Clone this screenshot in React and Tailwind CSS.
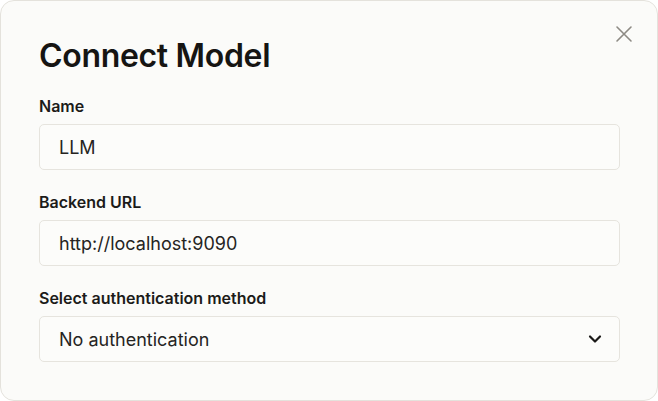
import React from 'react';

const Field = ({ label, children }) => (
  <div className="flex flex-col">
    <label className="text-[16px] leading-5 font-semibold text-[#1c1b19] mb-2">{label}</label>
    {children}
  </div>
);

const inputCls = 'h-[46px] flex items-center px-[19px] bg-[#fcfcfa] border border-[#e6e4de] rounded-[5px] text-[18px] text-[#252422]';

const App = () => {
  return (
    <div className="w-[658px] h-[401px] bg-white" style={{ fontFamily: 'Inter, "Noto Sans", sans-serif' }}>
      <div className="relative w-full h-full bg-[#fbfbf9] border border-[#e4e2dc] rounded-[14px] px-[38px] pt-[37px]">
        <button className="absolute top-[24px] right-[24px] text-[#8d8a84]">
          <svg width="18" height="18" viewBox="0 0 18 18" fill="none" stroke="currentColor" strokeWidth="1.6" strokeLinecap="round">
            <path d="M2 2L16 16M16 2L2 16" />
          </svg>
        </button>

        <h1 className="text-[32px] leading-9 font-semibold tracking-[-0.01em] text-[#161513] mb-[22px]">Connect Model</h1>

        <div className="flex flex-col gap-[22px] w-[581px]">
          <Field label="Name">
            <div className={inputCls}>LLM</div>
          </Field>
          <Field label="Backend URL">
            <div className={inputCls}>http://localhost:9090</div>
          </Field>
          <Field label="Select authentication method">
            <div className={inputCls + ' justify-between pr-[16px]'}>
              <span>No authentication</span>
              <svg width="16" height="16" viewBox="0 0 16 16" fill="none" stroke="#1a1917" strokeWidth="2.2" strokeLinecap="round" strokeLinejoin="round">
                <path d="M3 5.5L8 10.5L13 5.5" />
              </svg>
            </div>
          </Field>
        </div>
      </div>
    </div>
  );
};

export default App;
